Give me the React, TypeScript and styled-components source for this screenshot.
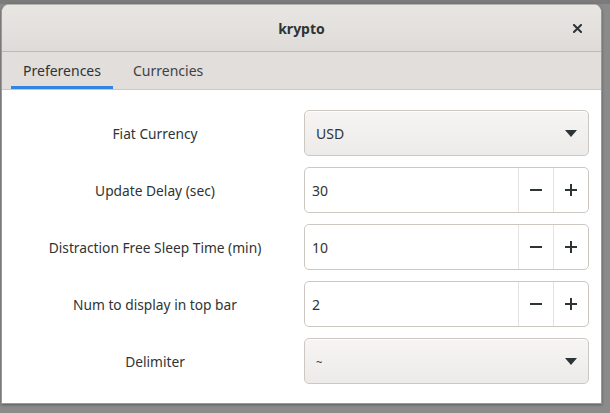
import React from "react";
import styled, { createGlobalStyle } from "styled-components";

const Global = createGlobalStyle`
  html, body { margin: 0; padding: 0; }
  body {
    width: 610px;
    height: 413px;
    overflow: hidden;
    background: #8a8a8a;
    font-family: "Noto Sans", "Open Sans", sans-serif;
  }
`;

const Backdrop = styled.div`
  width: 610px;
  height: 413px;
  box-sizing: border-box;
  padding: 4px 0 0 1px;
  background: linear-gradient(#7b7b7b 0 4px, #8b8b8b 4px);
`;

const Window = styled.div`
  width: 601px;
  height: 400px;
  box-sizing: border-box;
  border: 1px solid #9d9893;
  border-top-color: #b5b1ad;
  border-radius: 8px 8px 0 0;
  background: #ffffff;
  display: flex;
  flex-direction: column;
  overflow: hidden;
  box-shadow: 0 1px 3px rgba(0, 0, 0, 0.35);
`;

const HeaderBar = styled.div`
  height: 46px;
  flex: none;
  display: grid;
  grid-template-columns: 1fr auto 1fr;
  align-items: center;
  background: linear-gradient(#e8e6e3, #dfdbd8);
  border-bottom: 1px solid #bfb8b1;
`;

const Title = styled.div`
  grid-column: 2;
  font-weight: 700;
  font-size: 14px;
  color: #2e3436;
`;

const CloseIcon = styled.svg`
  grid-column: 3;
  justify-self: end;
  margin-right: 19px;
  width: 9px;
  height: 9px;
`;

const TabBar = styled.div`
  height: 37px;
  flex: none;
  display: flex;
  align-items: stretch;
  padding-left: 9px;
  background: #e1dedb;
  border-bottom: 1px solid #cdc7c2;
`;

const Tab = styled.div<{ $active?: boolean }>`
  display: flex;
  align-items: center;
  justify-content: center;
  box-sizing: border-box;
  padding: 3px 12px 0;
  margin-right: 8px;
  font-size: 14px;
  color: ${(p) => (p.$active ? "#2e3436" : "#3d4244")};
  border-bottom: 3px solid ${(p) => (p.$active ? "#3584e4" : "transparent")};
  min-width: ${(p) => (p.$active ? "102px" : "auto")};
`;

const Content = styled.div`
  flex: 1;
  display: grid;
  grid-template-columns: 290px 285px;
  column-gap: 4px;
  row-gap: 11px;
  align-content: start;
  padding: 20px 0 0 8px;
`;

const Label = styled.div`
  display: flex;
  align-items: center;
  justify-content: center;
  font-size: 13.75px;
  color: #2e3436;
  height: 46px;
`;

const Combo = styled.div`
  height: 46px;
  box-sizing: border-box;
  border: 1px solid #cdc7c2;
  border-radius: 5px;
  background: linear-gradient(#f6f5f4, #edebe9);
  display: flex;
  align-items: center;
  justify-content: space-between;
  padding: 0 11px;
  font-size: 14px;
  color: #2e3436;
  box-shadow: inset 0 1px rgba(255, 255, 255, 0.8);
`;

const Tilde = styled.span`
  font-size: 11px;
`;

const Arrow = styled.svg`
  width: 12px;
  height: 7px;
  flex: none;
`;

const Spin = styled.div`
  height: 46px;
  box-sizing: border-box;
  border: 1px solid #cdc7c2;
  border-radius: 5px;
  background: #ffffff;
  display: flex;
  align-items: stretch;
  overflow: hidden;
`;

const SpinValue = styled.div`
  flex: 1;
  display: flex;
  align-items: center;
  padding-left: 7px;
  font-size: 14px;
  color: #2e3436;
`;

const SpinButton = styled.div`
  width: 34px;
  border-left: 1px solid #e6e2df;
  display: flex;
  align-items: center;
  justify-content: center;
`;

const SignIcon = styled.svg`
  width: 12px;
  height: 12px;
`;

const DropArrow = () => (
  <Arrow viewBox="0 0 12 7">
    <path d="M0 0 H12 L6 7 Z" fill="#2e3436" />
  </Arrow>
);

const Minus = () => (
  <SignIcon viewBox="0 0 12 12">
    <rect x="0" y="5" width="12" height="2" fill="#2e3436" />
  </SignIcon>
);

const Plus = () => (
  <SignIcon viewBox="0 0 12 12">
    <rect x="0" y="5" width="12" height="2" fill="#2e3436" />
    <rect x="5" y="0" width="2" height="12" fill="#2e3436" />
  </SignIcon>
);

const SpinRow = ({ value }: { value: string }) => (
  <Spin>
    <SpinValue>{value}</SpinValue>
    <SpinButton>
      <Minus />
    </SpinButton>
    <SpinButton>
      <Plus />
    </SpinButton>
  </Spin>
);

export default function App() {
  return (
    <>
      <Global />
      <Backdrop>
        <Window>
          <HeaderBar>
            <Title>krypto</Title>
            <CloseIcon viewBox="0 0 9 9">
              <path d="M1 1 L8 8 M8 1 L1 8" stroke="#2e3436" strokeWidth="2" strokeLinecap="square" />
            </CloseIcon>
          </HeaderBar>
          <TabBar>
            <Tab $active>Preferences</Tab>
            <Tab>Currencies</Tab>
          </TabBar>
          <Content>
            <Label>Fiat Currency</Label>
            <Combo>
              <span>USD</span>
              <DropArrow />
            </Combo>
            <Label>Update Delay (sec)</Label>
            <SpinRow value="30" />
            <Label>Distraction Free Sleep Time (min)</Label>
            <SpinRow value="10" />
            <Label>Num to display in top bar</Label>
            <SpinRow value="2" />
            <Label>Delimiter</Label>
            <Combo>
              <Tilde>~</Tilde>
              <DropArrow />
            </Combo>
          </Content>
        </Window>
      </Backdrop>
    </>
  );
}
